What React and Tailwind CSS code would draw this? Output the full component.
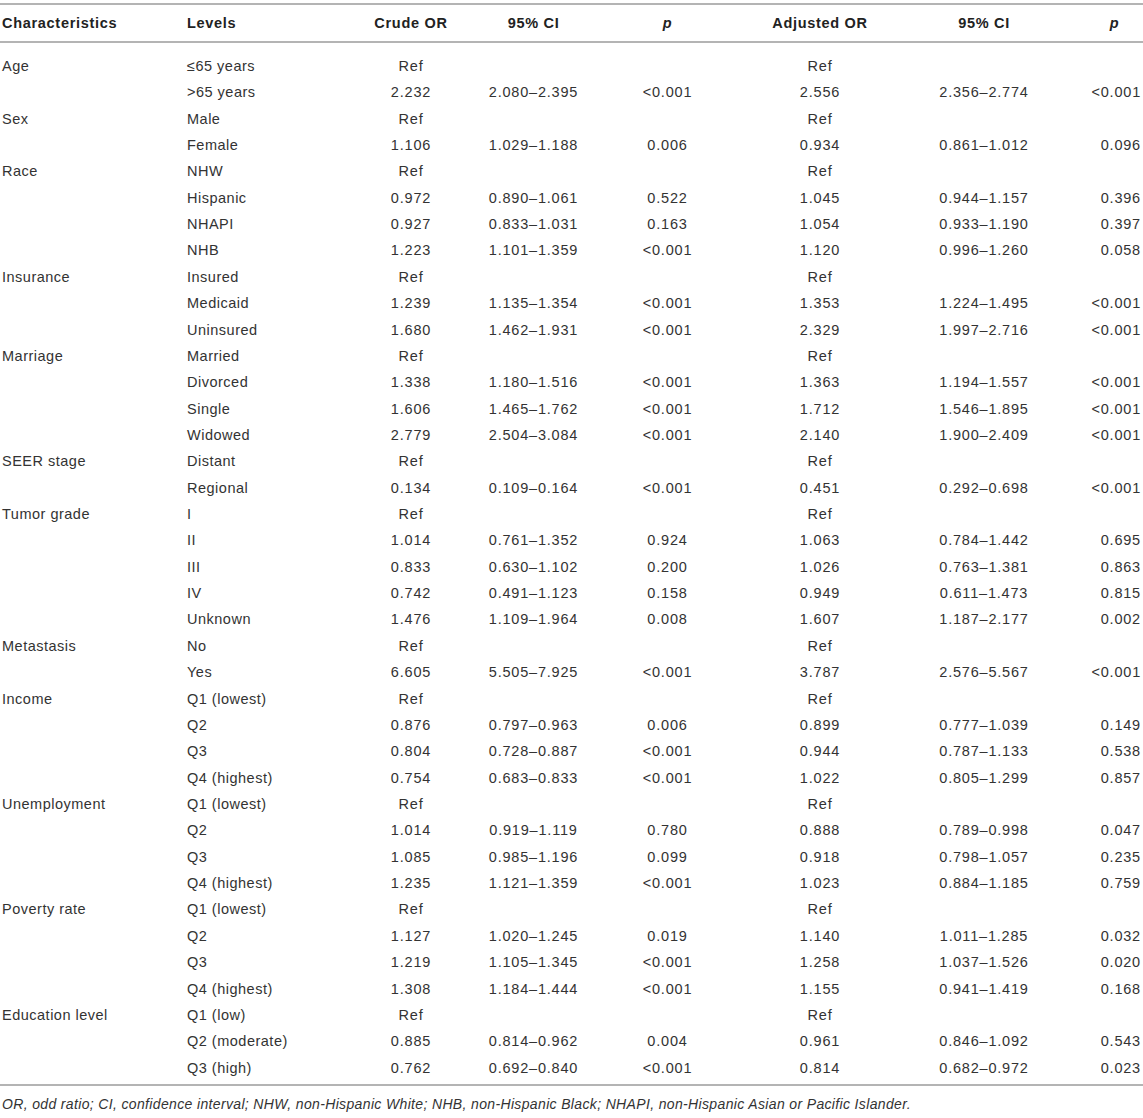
const HEAD = ['Characteristics', 'Levels', 'Crude OR', '95% CI', 'p', 'Adjusted OR', '95% CI', 'p']

const GROUPS = [
  ['Age', [
    ['≤65 years', 'Ref', '', '', 'Ref', '', ''],
    ['>65 years', '2.232', '2.080–2.395', '<0.001', '2.556', '2.356–2.774', '<0.001'],
  ]],
  ['Sex', [
    ['Male', 'Ref', '', '', 'Ref', '', ''],
    ['Female', '1.106', '1.029–1.188', '0.006', '0.934', '0.861–1.012', '0.096'],
  ]],
  ['Race', [
    ['NHW', 'Ref', '', '', 'Ref', '', ''],
    ['Hispanic', '0.972', '0.890–1.061', '0.522', '1.045', '0.944–1.157', '0.396'],
    ['NHAPI', '0.927', '0.833–1.031', '0.163', '1.054', '0.933–1.190', '0.397'],
    ['NHB', '1.223', '1.101–1.359', '<0.001', '1.120', '0.996–1.260', '0.058'],
  ]],
  ['Insurance', [
    ['Insured', 'Ref', '', '', 'Ref', '', ''],
    ['Medicaid', '1.239', '1.135–1.354', '<0.001', '1.353', '1.224–1.495', '<0.001'],
    ['Uninsured', '1.680', '1.462–1.931', '<0.001', '2.329', '1.997–2.716', '<0.001'],
  ]],
  ['Marriage', [
    ['Married', 'Ref', '', '', 'Ref', '', ''],
    ['Divorced', '1.338', '1.180–1.516', '<0.001', '1.363', '1.194–1.557', '<0.001'],
    ['Single', '1.606', '1.465–1.762', '<0.001', '1.712', '1.546–1.895', '<0.001'],
    ['Widowed', '2.779', '2.504–3.084', '<0.001', '2.140', '1.900–2.409', '<0.001'],
  ]],
  ['SEER stage', [
    ['Distant', 'Ref', '', '', 'Ref', '', ''],
    ['Regional', '0.134', '0.109–0.164', '<0.001', '0.451', '0.292–0.698', '<0.001'],
  ]],
  ['Tumor grade', [
    ['I', 'Ref', '', '', 'Ref', '', ''],
    ['II', '1.014', '0.761–1.352', '0.924', '1.063', '0.784–1.442', '0.695'],
    ['III', '0.833', '0.630–1.102', '0.200', '1.026', '0.763–1.381', '0.863'],
    ['IV', '0.742', '0.491–1.123', '0.158', '0.949', '0.611–1.473', '0.815'],
    ['Unknown', '1.476', '1.109–1.964', '0.008', '1.607', '1.187–2.177', '0.002'],
  ]],
  ['Metastasis', [
    ['No', 'Ref', '', '', 'Ref', '', ''],
    ['Yes', '6.605', '5.505–7.925', '<0.001', '3.787', '2.576–5.567', '<0.001'],
  ]],
  ['Income', [
    ['Q1 (lowest)', 'Ref', '', '', 'Ref', '', ''],
    ['Q2', '0.876', '0.797–0.963', '0.006', '0.899', '0.777–1.039', '0.149'],
    ['Q3', '0.804', '0.728–0.887', '<0.001', '0.944', '0.787–1.133', '0.538'],
    ['Q4 (highest)', '0.754', '0.683–0.833', '<0.001', '1.022', '0.805–1.299', '0.857'],
  ]],
  ['Unemployment', [
    ['Q1 (lowest)', 'Ref', '', '', 'Ref', '', ''],
    ['Q2', '1.014', '0.919–1.119', '0.780', '0.888', '0.789–0.998', '0.047'],
    ['Q3', '1.085', '0.985–1.196', '0.099', '0.918', '0.798–1.057', '0.235'],
    ['Q4 (highest)', '1.235', '1.121–1.359', '<0.001', '1.023', '0.884–1.185', '0.759'],
  ]],
  ['Poverty rate', [
    ['Q1 (lowest)', 'Ref', '', '', 'Ref', '', ''],
    ['Q2', '1.127', '1.020–1.245', '0.019', '1.140', '1.011–1.285', '0.032'],
    ['Q3', '1.219', '1.105–1.345', '<0.001', '1.258', '1.037–1.526', '0.020'],
    ['Q4 (highest)', '1.308', '1.184–1.444', '<0.001', '1.155', '0.941–1.419', '0.168'],
  ]],
  ['Education level', [
    ['Q1 (low)', 'Ref', '', '', 'Ref', '', ''],
    ['Q2 (moderate)', '0.885', '0.814–0.962', '0.004', '0.961', '0.846–1.092', '0.543'],
    ['Q3 (high)', '0.762', '0.692–0.840', '<0.001', '0.814', '0.682–0.972', '0.023'],
  ]],
]

// column widths measured off the reference, sum = 1143
const GRID = 'grid grid-cols-[185px_165px_122px_123px_145px_160px_168px_75px]'

function Row({ label, cells }) {
  return (
    <div className={`${GRID} h-[26.37px] items-center`}>
      <div className="pl-[2px]">{label}</div>
      <div className="pl-[2px]">{cells[0]}</div>
      {cells.slice(1).map((c, i) => (
        <div
          key={i}
          className={i === 5 ? 'text-right pr-[2px] tracking-[0.8px]' : 'text-center tracking-[0.8px]'}
        >
          {c}
        </div>
      ))}
    </div>
  )
}

export default function App() {
  return (
    <div
      className="w-[1143px] h-[1118px] bg-white text-[#333] text-[14.5px] tracking-[0.5px] leading-none"
      style={{ fontFamily: '"Liberation Sans", Arial, sans-serif' }}
    >
      <div className="pt-[3px]">
        <div className="border-t-2 border-[#b4b4b4]" />
        <div className={`${GRID} h-[38px] items-center font-bold text-[#222] tracking-[0.7px] border-b-2 border-[#b4b4b4]`}>
          {HEAD.map((h, i) => (
            <div
              key={i}
              className={`${i < 2 ? 'pl-[2px]' : 'text-center'} ${h === 'p' ? 'italic' : ''} ${i === 7 ? 'pl-[18px]' : ''}`}
            >
              {h}
            </div>
          ))}
        </div>
        <div className="pt-[10px] pb-[3px] border-b-2 border-[#b4b4b4]">
          {GROUPS.map(([name, rows]) =>
            rows.map((r, j) => <Row key={name + j} label={j === 0 ? name : ''} cells={r} />)
          )}
        </div>
        <p className="pt-[11px] pl-[2px] italic text-[14px] tracking-[0.35px] text-[#333]">
          OR, odd ratio; CI, confidence interval; NHW, non-Hispanic White; NHB, non-Hispanic Black; NHAPI, non-Hispanic Asian or Pacific Islander.
        </p>
      </div>
    </div>
  )
}
